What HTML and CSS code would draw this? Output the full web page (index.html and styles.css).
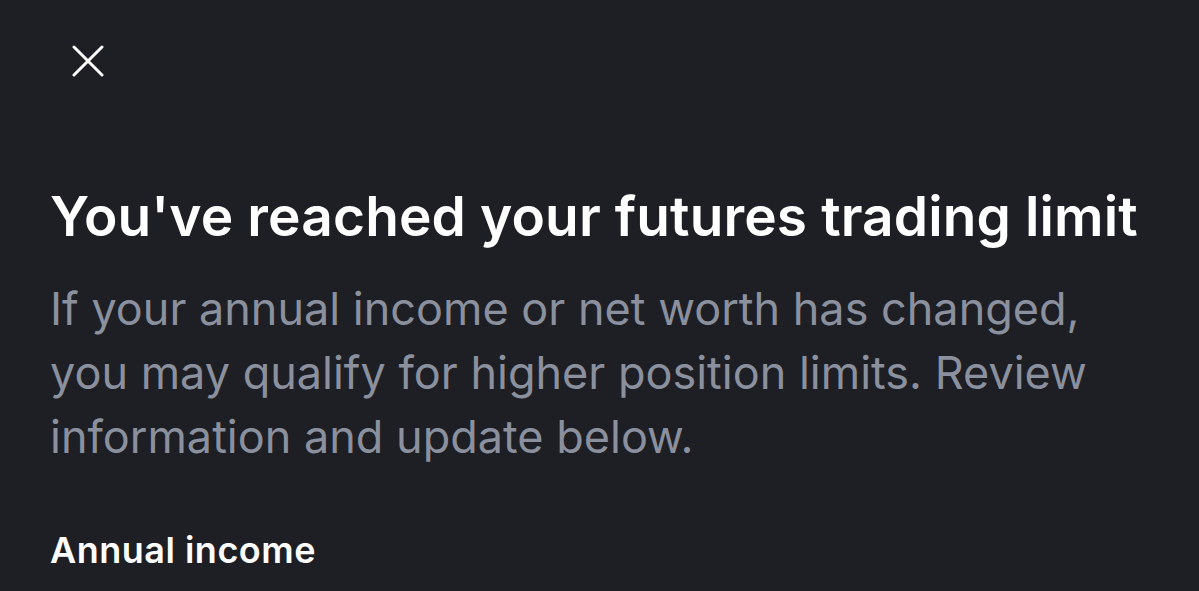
FILE: index.html
```html
<!DOCTYPE html>
<html lang="en">
<head>
    <meta charset="UTF-8">
    <meta name="viewport" content="width=device-width, initial-scale=1.0">
    <title>Futures trading limit</title>
    <link rel="stylesheet" href="styles.css">
</head>
<body>

    <div class="sheet">
        <div class="topbar">
            <button class="fechar" aria-label="Close">
                <svg width="32" height="32" viewBox="0 0 32 32">
                    <path d="M2 2 L30 30 M30 2 L2 30" stroke="#ffffff" stroke-width="3" stroke-linecap="round" fill="none"/>
                </svg>
            </button>
        </div>

        <h1 class="titulo">You've reached your futures trading limit</h1>
        <p class="descricao">If your annual income or net worth has changed, you may qualify for higher position limits. Review information and update below.</p>

        <h3 class="rotulo">Annual income</h3>
    </div>

</body>
</html>
```

FILE: styles.css
```css
body {
    margin: 0;
    background-color: #1e1f24;
    color: white;
    font-family: Inter, "Noto Sans", sans-serif;
    height: 100vh;
    overflow: hidden;
}

.sheet {
    padding: 0 50px;
}

.topbar {
    height: 184px;
    padding-top: 45px;
    box-sizing: border-box;
}

.fechar {
    background: none;
    border: none;
    padding: 0;
    margin-left: 22px;
    cursor: pointer;
    width: 32px;
    height: 32px;
}

.titulo {
    font-size: 55px;
    font-weight: 600;
    letter-spacing: 0.12px;
    line-height: 64px;
    margin: 0;
    white-space: nowrap;
}

.descricao {
    font-size: 45px;
    font-weight: 400;
    color: #8a909e;
    line-height: 64px;
    margin: 29px 0 0;
    max-width: 1100px;
}

.rotulo {
    font-size: 36px;
    font-weight: 600;
    letter-spacing: 0.5px;
    margin: 59px 0 0;
}
```
